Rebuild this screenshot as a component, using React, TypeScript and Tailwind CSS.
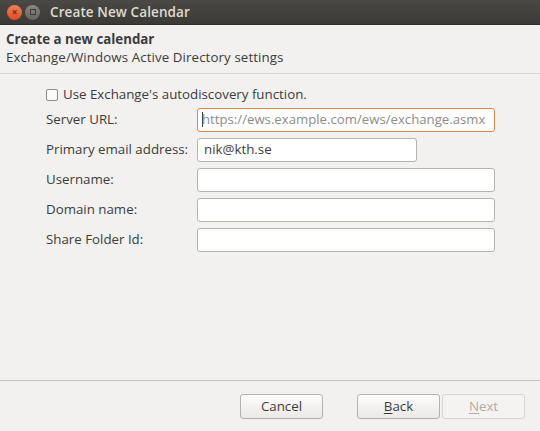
import React from "react";

export default function App() {
  const font = { fontFamily: '"Open Sans", "DejaVu Sans", sans-serif' };
  const rows = [
    { label: "Server URL:", w: "w-[298px]", value: "", placeholder: "https://ews.example.com/ews/exchange.asmx", focus: true },
    { label: "Primary email address:", w: "w-[220px]", value: "nik@kth.se" },
    { label: "Username:", w: "w-[298px]", value: "" },
    { label: "Domain name:", w: "w-[298px]", value: "" },
    { label: "Share Folder Id:", w: "w-[298px]", value: "" },
  ];
  return (
    <div className="w-[540px] h-[431px] bg-[#f2f1f0] flex flex-col text-[#3c3c3c] text-[13.3px] overflow-hidden" style={font}>
      <div className="h-[25px] flex items-center bg-gradient-to-b from-[#4a4944] to-[#3a3935] border-b border-[#2b2a27] shrink-0">
        <div className="ml-[7px] w-[15px] h-[15px] rounded-full bg-gradient-to-b from-[#f67e5a] to-[#df4a1f] flex items-center justify-center text-[#7a2a10] text-[10px] leading-none font-bold">×</div>
        <div className="ml-[3px] w-[15px] h-[15px] rounded-full bg-gradient-to-b from-[#8a8984] to-[#66655f] flex items-center justify-center">
          <div className="w-[6px] h-[6px] border border-[#3e3d39]" />
        </div>
        <div className="ml-[10px] text-[13.5px] font-semibold text-[#dfdbd2] tracking-[0.1px]">Create New Calendar</div>
      </div>
      <div className="h-[49px] px-[6px] pt-[5px] border-b border-[#dcd9d4] shrink-0">
        <div className="font-bold leading-[18px] text-[#3c3c3c]">Create a new calendar</div>
        <div className="leading-[19px] tracking-[0.1px]">Exchange/Windows Active Directory settings</div>
      </div>
      <div className="flex-1 pl-[46px] pt-[13px] flex flex-col">
        <label className="flex items-center h-[15px] mb-[6px]">
          <span className="w-[12px] h-[12px] border border-[#8c8a86] rounded-[2px] bg-[#fbfbfb]" />
          <span className="ml-[5px]">Use Exchange's autodiscovery function.</span>
        </label>
        <div className="flex flex-col gap-[6px]">
          {rows.map((r) => (
            <div key={r.label} className="flex items-center h-[24px]">
              <div className="w-[151px]">{r.label}</div>
              <div
                className={`${r.w} h-[24px] rounded-[3px] bg-white flex items-center border ${
                  r.focus ? "border-[#e5804f] px-[4px]" : "border-[#b6b3ae] px-[6px]"
                }`}
              >
                {r.focus ? (
                  <span className="flex items-center text-[#8e8c88] whitespace-nowrap text-[13.2px]">
                    <span className="w-[1px] h-[15px] bg-[#3c3c3c] mr-[-1px]" />
                    {r.placeholder}
                  </span>
                ) : (
                  <span className="text-[#3c3c3c]">{r.value}</span>
                )}
              </div>
            </div>
          ))}
        </div>
      </div>
      <div className="border-t border-[#c4c1bc] h-[51px] shrink-0 flex items-start pt-[13px] pl-[240px]">
        <button className="w-[83px] h-[25px] rounded-[3px] border border-[#b5b2ad] bg-gradient-to-b from-[#fcfcfc] to-[#ebe9e6] text-[#3c3c3c]">Cancel</button>
        <button className="ml-[34px] w-[83px] h-[25px] rounded-[3px] border border-[#b5b2ad] bg-gradient-to-b from-[#fcfcfc] to-[#ebe9e6] text-[#3c3c3c]">
          <span className="underline underline-offset-2">B</span>ack
        </button>
        <button className="ml-[2px] w-[83px] h-[25px] rounded-[3px] border border-[#d8d5d0] bg-[#f4f3f1] text-[#aeaca8]">
          <span className="underline underline-offset-2">N</span>ext
        </button>
      </div>
    </div>
  );
}
